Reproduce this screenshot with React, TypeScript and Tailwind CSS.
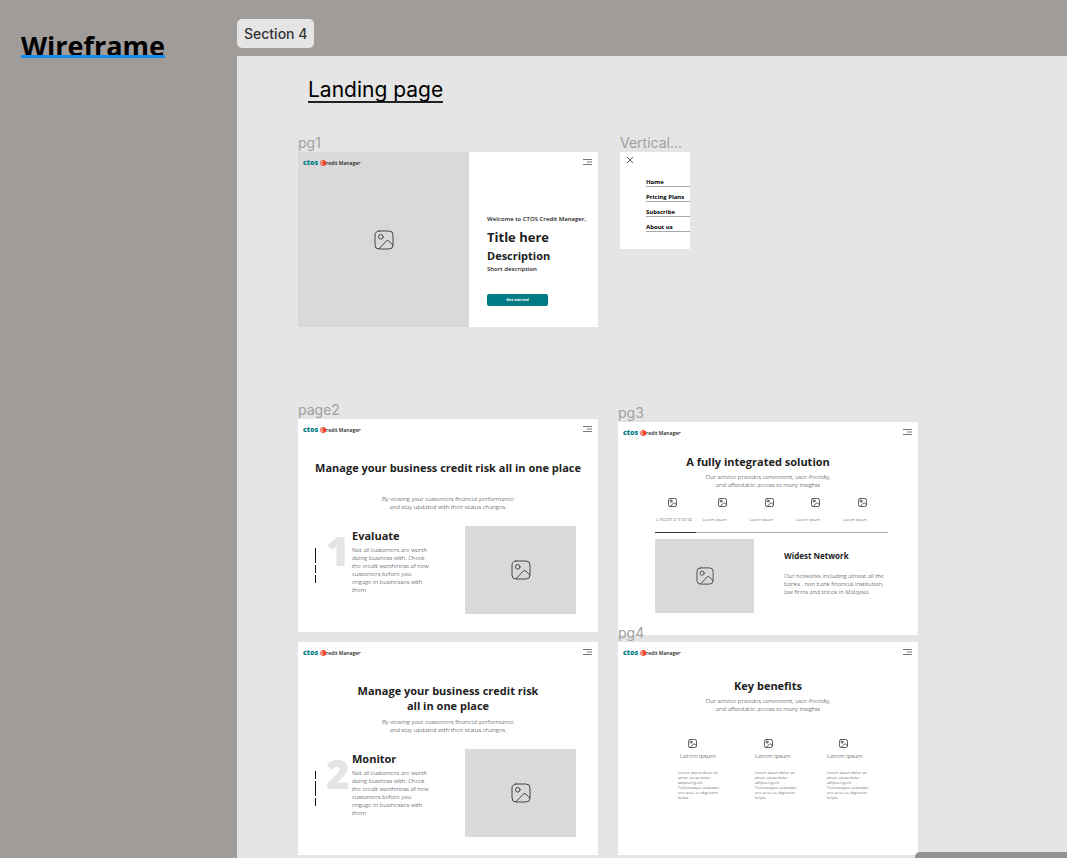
import type { ReactNode } from "react";

const SANS = "font-['Open_Sans','Noto_Sans',sans-serif]";

function Logo() {
  return (
    <a href="#" aria-label="ctos Credit Manager" className="flex h-2 items-center">
      <span className="w-[17px] font-['Noto_Sans',sans-serif] text-[7px] leading-2 font-black text-[#007a83]">ctos</span>
      <svg viewBox="0 0 12 12" className="size-[6px]" aria-hidden="true">
        <circle cx="6" cy="6" r="5" fill="#fbd3cc" stroke="#ef3e23" strokeWidth="1.8" />
        <path d="M12 3.5A4.5 4.5 0 1 0 12 8.5Z" fill="#ef3e23" />
        <path d="M7.4 3.6a2.8 2.8 0 1 0 0 4.8" fill="none" stroke="#fff" strokeWidth="0.8" />
      </svg>
      <span className="text-[5px] leading-2 font-semibold whitespace-nowrap text-[#222]">redit Manager</span>
      <span className="mt-[3px] size-px self-start bg-[#999]" />
    </a>
  );
}

function MenuButton() {
  return (
    <button type="button" aria-label="Open menu" className="block h-[6px] w-[9px]">
      <svg viewBox="0 0 9 6" className="h-[6px] w-[9px]" fill="none" stroke="#555" strokeWidth="0.8">
        <path d="M0 0.5H9M4 3H9M0 5.5H9" />
      </svg>
    </button>
  );
}

function Picture({ className, weight = 1 }: { className: string; weight?: number }) {
  return (
    <svg viewBox="0 0 20 20" className={className} fill="none" stroke="#444" strokeWidth={weight} strokeLinecap="round" strokeLinejoin="round" aria-hidden="true">
      <rect x="1" y="1" width="18" height="18" rx="4" />
      <circle cx="6.8" cy="6.8" r="2.3" />
      <path d="M5 18.8L12.2 11.2Q13.6 9.8 15 11.2L19 15.2" />
    </svg>
  );
}

function Header() {
  return (
    <header className="flex h-5 shrink-0 items-start justify-between pt-[7px] pr-[6px] pl-[5px]">
      <Logo />
      <MenuButton />
    </header>
  );
}

function Frame({ label, place, size, children }: { label?: string; place: string; size: string; children: ReactNode }) {
  return (
    <article className={`absolute ${place}`}>
      <h2 className="h-[18px] font-['Inter',sans-serif] text-[14px] leading-[18px] text-[#a0a0a0]">{label}</h2>
      <div className={`flex flex-col bg-white text-[#222] ${size}`}>{children}</div>
    </article>
  );
}

function Heading({ children }: { children: ReactNode }) {
  return <h3 className="text-center text-[11px] leading-[15px] font-bold">{children}</h3>;
}

function Body({ className = "", children }: { className?: string; children: ReactNode }) {
  return <p className={`text-[6px] leading-2 font-light text-[#222] ${className}`}>{children}</p>;
}

function StepPage({ title, number, name, bars }: { title: ReactNode; number: string; name: string; bars: string[] }) {
  return (
    <>
      <Header />
      <div className="mt-[21px] h-[35px]"><Heading>{title}</Heading></div>
      <Body className="text-center">By viewing your customers financial performance<br />and stay updated with their status changes.</Body>
      <div className="mt-[15px] flex pl-[17px]">
        <div className="flex w-[11px] flex-col gap-[2px] pt-[22px]">
          {bars.map((bar, i) => <span key={i} className={`w-px bg-[#111] ${bar}`} />)}
        </div>
        <div className="w-[26px] pt-[5px] text-[40px] leading-10 font-extrabold text-[#e4e4e4]">{number}</div>
        <div className="w-[113px] pt-[2px]">
          <h4 className="text-[11px] leading-[15px] font-bold">{name}</h4>
          <Body className="mt-[3px]">Not all customers are worth<br />doing business with. Check<br />the credit worthiness of new<br />customers before you<br />engage in businesses with<br />them</Body>
        </div>
        <div className="flex h-[88px] w-[111px] items-center justify-center bg-[#d9d9d9]">
          <Picture className="size-[20px]" />
        </div>
      </div>
    </>
  );
}

function Intro() {
  return <Body className="text-center">Our service provides convenient, user-friendly,<br />and affordable access to many insights</Body>;
}

const tabs = ["LARGEST DATABASE", "Lorem ipsum", "Lorem ipsum", "Lorem ipsum", "Lorem ipsum"];
const links = ["Home", "Pricing Plans", "Subscribe", "About us"];
const benefits = [
  { column: "w-[77px]", icon: "ml-[10px] size-[9px]", title: "pl-[2px]" },
  { column: "w-[72px]", icon: "ml-[9px] size-[9px]", title: "" },
  { column: "w-[60px]", icon: "ml-3 size-[9px]", title: "" },
];

export default function App() {
  return (
    <main className={`flex h-screen overflow-hidden bg-[#a09c9a] ${SANS}`}>
      <aside className="w-[237px] shrink-0 pt-7 pl-[21px]">
        <h1 className="relative w-fit text-[27px] leading-9 font-bold text-black">
          Wireframe
          <span className="absolute inset-x-0 bottom-[6px] h-[3px] bg-[#168be8]" />
        </h1>
      </aside>
      <div className="flex min-w-0 flex-1 flex-col pt-[19px]">
        <div className="h-[37px]">
          <span className="block h-[29px] w-fit rounded-[5px] bg-[#e5e5e5] px-[7px] font-['Inter',sans-serif] text-[14px] leading-[29px] font-medium text-[#333]">Section 4</span>
        </div>
        <section className="relative min-h-0 flex-1 overflow-hidden bg-[#e5e5e5]">
          <h2 className="absolute top-[22px] left-[71px] h-[25px] border-b-2 border-[#222] font-['Inter',sans-serif] text-[21px] leading-6 whitespace-nowrap text-black">Landing page</h2>

          <Frame label="pg1" place="top-[78px] left-[61px]" size="h-[175px] w-[300px]">
            <div className="flex flex-1">
              <div className="flex w-[57%] flex-col bg-[#d9d9d9] pt-[7px] pl-[5px]">
                <Logo />
                <div className="flex flex-1 items-center justify-center pr-[5px] pb-[14px]"><Picture className="size-[20px]" /></div>
              </div>
              <div className="flex flex-1 flex-col pt-[7px] pl-[18px]">
                <div className="flex justify-end pr-[6px]"><MenuButton /></div>
                <p className="mt-[50px] text-[6px] leading-2 font-semibold whitespace-nowrap">Welcome to CTOS Credit Manager,</p>
                <h3 className="mt-[5px] text-[13px] leading-[18px] font-bold">Title here</h3>
                <h4 className="mt-[2px] text-[11px] leading-4 font-bold">Description</h4>
                <p className="mt-px text-[6px] leading-2 font-semibold">Short description</p>
                <button type="button" className="mt-[21px] h-3 w-[61px] rounded-[2px] bg-[#007a83] text-[4px] leading-3 font-bold text-white">Get started</button>
              </div>
            </div>
          </Frame>

          <Frame label="Vertical..." place="top-[78px] left-[383px]" size="h-[97px] w-[70px]">
            <button type="button" aria-label="Close menu" className="mt-1 ml-[6px] size-2">
              <svg viewBox="0 0 8 8" className="size-2" stroke="#333" strokeWidth="0.8"><path d="M1 1L7 7M7 1L1 7" /></svg>
            </button>
            <nav className="mt-[13px] ml-[26px] flex flex-col gap-[5px]">
              {links.map((link) => <a key={link} href="#" className="h-[10px] border-b border-[#aaa] text-[6px] leading-[10px] font-bold whitespace-nowrap text-black">{link}</a>)}
            </nav>
          </Frame>

          <Frame label="page2" place="top-[345px] left-[61px]" size="h-[213px] w-[300px]">
            <StepPage title="Manage your business credit risk all in one place" number="1" name="Evaluate" bars={["h-[15px]", "h-2", "h-2"]} />
          </Frame>

          <Frame label="pg3" place="top-[348px] left-[381px]" size="h-[213px] w-[300px]">
            <Header />
            <div className="mt-3 pr-5"><Heading>A fully integrated solution</Heading></div>
            <div className="mt-1"><Intro /></div>
            <ul className="mt-[9px] ml-[38px] grid w-[234px] grid-cols-5">
              {tabs.map((tab, i) => (
                <li key={i}>
                  <Picture weight={2} className={i === 0 ? "ml-3 size-[9px]" : "ml-[15px] size-[9px]"} />
                  <p className="mt-[10px] text-[4px] leading-[6px] font-light whitespace-nowrap text-[#333]">{tab}</p>
                </li>
              ))}
            </ul>
            <div className="mt-[9px] ml-[37px] h-px w-[233px] bg-[#aaa]"><div className="h-px w-[41px] bg-[#333]" /></div>
            <div className="mt-[6px] ml-[37px] flex">
              <div className="flex h-[74px] w-[99px] items-center justify-center bg-[#d9d9d9]"><Picture className="size-[18px]" /></div>
              <div className="pt-[11px] pl-[30px]">
                <h4 className="text-[8px] leading-3 font-bold">Widest Network</h4>
                <Body className="mt-[10px]">Our networks including almost all the<br />banks , non bank financial institution,<br />law firms and telcos in Malaysia.</Body>
              </div>
            </div>
          </Frame>

          <Frame place="top-[568px] left-[61px]" size="h-[213px] w-[300px]">
            <StepPage title={<>Manage your business credit risk<br />all in one place</>} number="2" name="Monitor" bars={["h-2", "h-[15px]", "h-2"]} />
          </Frame>

          <Frame label="pg4" place="top-[568px] left-[381px]" size="h-[213px] w-[300px]">
            <Header />
            <div className="mt-4"><Heading>Key benefits</Heading></div>
            <div className="mt-1"><Intro /></div>
            <ul className="mt-[26px] ml-[60px] flex">
              {benefits.map(({ column, icon, title }) => (
                <li key={column} className={column}>
                  <Picture weight={2} className={icon} />
                  <h4 className={`mt-1 text-[6px] leading-2 font-light ${title}`}>Lorem ipsum</h4>
                  <p className="mt-[10px] text-[4px] leading-[5px] font-light whitespace-nowrap text-[#333]">Lorem ipsum dolor sit<br />amet, consectetur<br />adipiscing elit.<br />Pellentesque vulputate<br />orci arcu, eu dignissim<br />turpis.</p>
                </li>
              ))}
            </ul>
          </Frame>

          <div className="absolute right-0 bottom-0 h-[6px] w-[152px] rounded-tl-[5px] bg-[#929292]" />
        </section>
      </div>
    </main>
  );
}
